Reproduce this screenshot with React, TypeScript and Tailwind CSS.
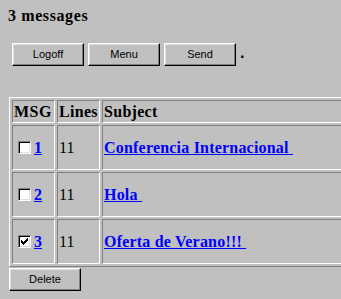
import React from "react";

const btn =
  "w-[72px] h-[23px] bg-[#c0c0c0] border border-t-white border-l-white border-r-black border-b-black shadow-[inset_-1px_-1px_0_#808080,inset_1px_1px_0_#dfdfdf] text-[11px] text-black flex items-center justify-center leading-none";

const cell = "border border-t-[#808080] border-l-[#808080] border-r-white border-b-white p-[1px] align-middle";

function Check({ checked }: { checked?: boolean }) {
  return (
    <span className="inline-block w-[13px] h-[13px] bg-white border border-t-[#808080] border-l-[#808080] border-r-white border-b-white shadow-[inset_1px_1px_0_#000,inset_-1px_-1px_0_#dfdfdf] ml-[4px] mr-[3px] relative align-[-1px]">
      {checked && (
        <svg className="absolute left-[2px] top-[2px]" width="7" height="7" viewBox="0 0 7 7">
          <path d="M0 2h1v1h1v1h1V3h1V2h1V1h1V0h1v3H6v1H5v1H4v1H3v1H2V6H1V5H0z" fill="#000" />
        </svg>
      )}
    </span>
  );
}

const rows = [
  { n: "1", lines: "11", subj: "Conferencia Internacional", checked: false },
  { n: "2", lines: "11", subj: "Hola", checked: false },
  { n: "3", lines: "11", subj: "Oferta de Verano!!!", checked: true },
];

export default function App() {
  return (
    <div
      className="w-[341px] h-[299px] overflow-hidden bg-[#c0c0c0] text-black"
      style={{ fontFamily: '"Liberation Serif", "Times New Roman", serif' }}
    >
      <div className="pl-[8px] pt-[7px] text-[16px] leading-[18px] font-bold tracking-[0.6px]">3 messages</div>
      <div
        className="flex items-start gap-[4px] pl-[12px] mt-[18px]"
        style={{ fontFamily: '"Liberation Sans", Arial, sans-serif' }}
      >
        <div className={btn}>Logoff</div>
        <div className={btn}>Menu</div>
        <div className={btn}>Send</div>
        <div className="text-[16px] font-bold leading-none mt-[2px]">.</div>
      </div>
      <div className="pl-[9px] mt-[31px]">
        <table className="w-[420px] border-separate border-spacing-[2px] border border-t-white border-l-white border-r-[#808080] border-b-[#808080] text-[16px] leading-[19px]">
          <thead>
            <tr>
              <th className={cell + " text-left font-bold w-[43px] tracking-[0.5px]"}>MSG</th>
              <th className={cell + " text-left font-bold w-[43px] tracking-[0.3px]"}>Lines</th>
              <th className={cell + " text-left font-bold tracking-[0.3px]"}>Subject</th>
            </tr>
          </thead>
          <tbody>
            {rows.map((r) => (
              <tr key={r.n}>
                <td className={cell + " h-[45px] whitespace-nowrap"}>
                  <Check checked={r.checked} />
                  <span className="text-[#0000ff] underline font-bold">{r.n}</span>
                </td>
                <td className={cell + " h-[45px]"}>{r.lines}</td>
                <td className={cell + " h-[45px] whitespace-nowrap"}>
                  <span className="text-[#0000ff] underline font-bold tracking-[0.2px]">{r.subj + "\u00a0"}</span>
                </td>
              </tr>
            ))}
          </tbody>
        </table>
      </div>
      <div className="pl-[9px] pt-[1px]" style={{ fontFamily: '"Liberation Sans", Arial, sans-serif' }}>
        <div className={btn}>Delete</div>
      </div>
    </div>
  );
}
